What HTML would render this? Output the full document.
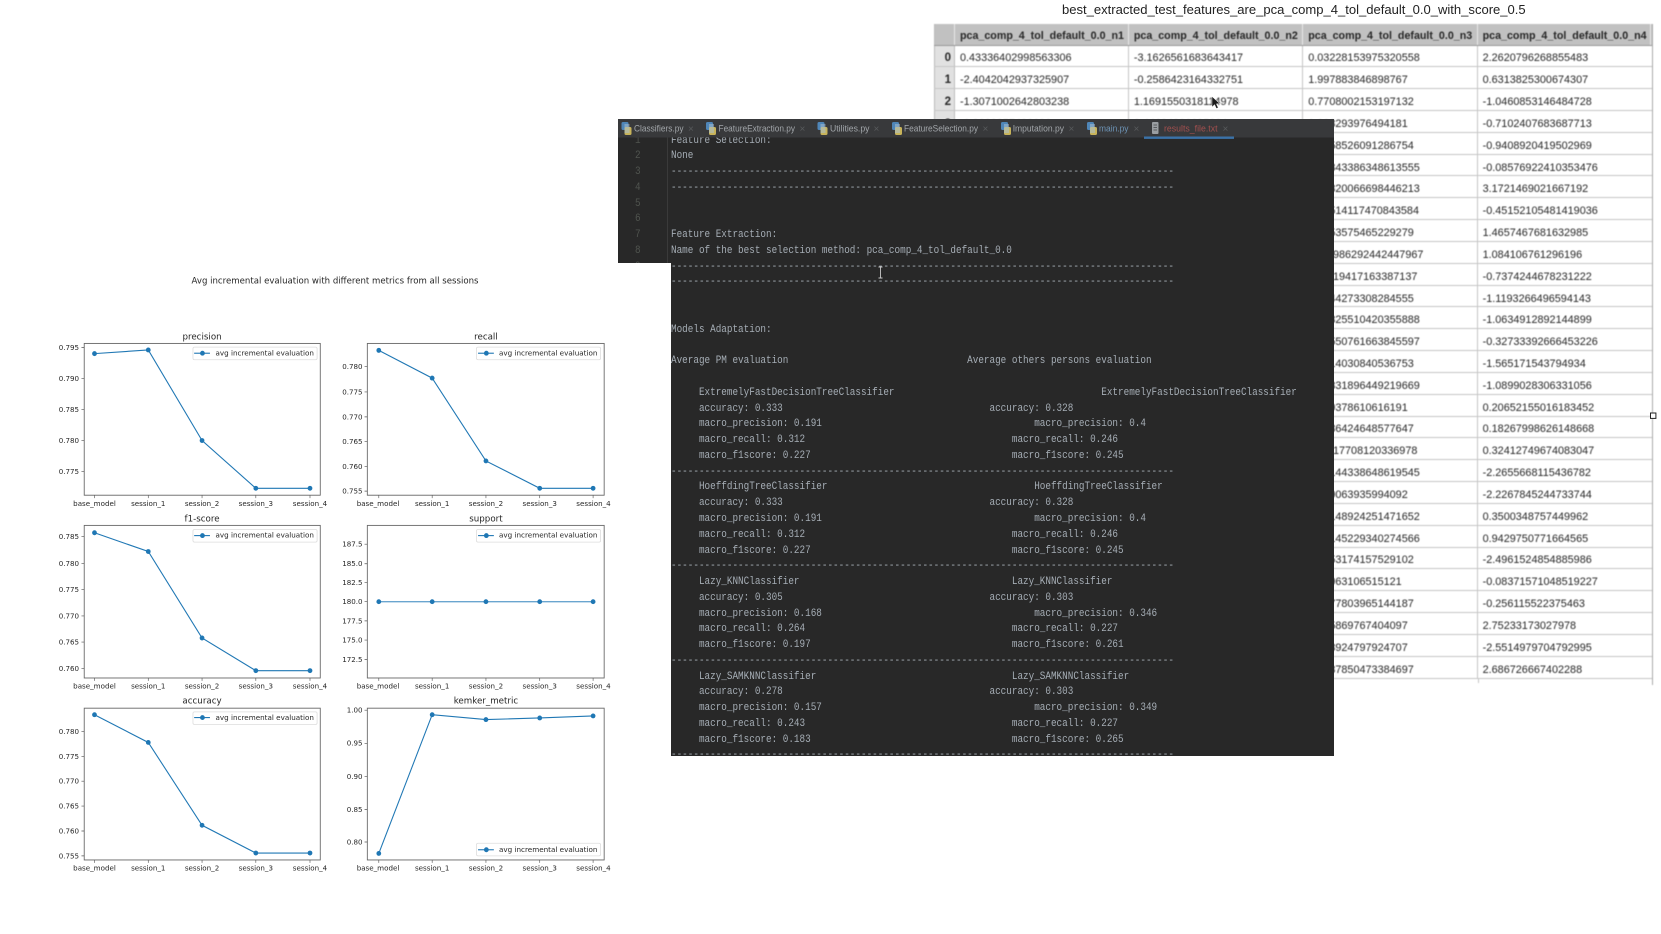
<!DOCTYPE html>
<html lang="en">
<head>
<meta charset="utf-8">
<title>Evaluation results</title>
<style>
html,body{margin:0;padding:0;background:#fff}
body{width:1661px;height:934px;overflow:hidden;position:relative}
#plots{position:absolute;left:0;top:0;filter:blur(.3px)}
#plots text{font-family:"DejaVu Sans","Liberation Sans",sans-serif;fill:#262626}
#plots .t{font-size:18px}
#plots .e{text-anchor:end}
#plots .m{text-anchor:middle}
#plots .h{font-size:22px;text-anchor:middle}
#plots .ax{fill:none;stroke:#666;stroke-width:2.2}
#plots .tk{fill:none;stroke:#555;stroke-width:1.6}
#plots .ln{fill:none;stroke:#1f77b4;stroke-width:2.7}
#plots .dt{fill:#1f77b4}
#plots .lg{fill:#fff;stroke:#ddd;stroke-width:2}
#title{position:absolute;left:1062px;top:2px;width:463px;text-align:center;font:13.04px/16px "Liberation Sans",sans-serif;color:#222;white-space:nowrap;filter:blur(.35px)}
#tbl{position:absolute;left:933.5px;top:23.5px;width:719px;height:661px;font:10.85px "Liberation Sans",sans-serif;color:#262626;filter:blur(.4px);border-right:1px solid #aaa;box-sizing:border-box}
#tbl .r{display:flex;height:21.83px;box-sizing:border-box;border-bottom:1.6px solid #c6c6c6;align-items:center}
#tbl .r.hd{height:22px;background:#c1c1c1;font-weight:bold;font-size:10.7px;border-bottom:1px solid #999}
#tbl .i{width:21.5px;height:100%;background:#e1e1e1;font-weight:bold;text-align:right;padding-right:3px;padding-top:5px;box-sizing:border-box;display:flex;align-items:center;justify-content:flex-end;font-size:11.5px;border-right:1.4px solid #bcbcbc;border-left:1px solid #bbb}
#tbl .hd .i{background:#c1c1c1;border-right:1.4px solid #e8e8e8;padding-top:3px}
#tbl .c{height:100%;box-sizing:border-box;padding-left:5px;padding-top:5px;display:flex;align-items:center;white-space:nowrap;border-right:1.4px solid #c6c6c6;overflow:hidden}
#tbl .hd .c{border-right:1.4px solid #e8e8e8;padding-top:3px}
#tbl .a{width:174px}
#tbl .b{width:174.5px}
#tbl .d{width:174.5px}
#tbl .f{width:174px;border-right:0}
#tbl .tail{height:4px;position:relative}
#tbl .tail i{position:absolute;top:0;bottom:0;width:1.4px;background:#c6c6c6;display:block}
#ed{position:absolute;left:618px;top:119px;width:716px;height:637px;background:#282828;clip-path:polygon(0 0,100% 0,100% 100%,53px 100%,53px 144px,0 144px);overflow:hidden}
#gut{position:absolute;left:49px;top:18px;width:1px;height:126px;background:#3a3a3a}
#code,#nums{position:absolute;margin:0;font:11px/15.77px "Liberation Mono",monospace;transform-origin:0 0;transform:scaleX(.8465);white-space:pre;filter:blur(.35px)}
#code{left:52.5px;top:14.6px;color:#a6aeb6}
#nums{left:17px;top:14.6px;color:#50544f}
#tabs{position:absolute;left:0;top:0;filter:blur(.35px)}
#tabs text{font-family:"Liberation Sans",sans-serif;font-size:9.5px;fill:#a2a6aa}
#tabs .x{fill:#585a5c;font-size:10px}
#top{position:absolute;left:0;top:0;pointer-events:none}
</style>
</head>
<body>

<svg id="plots" width="1661" height="934" viewBox="0 0 1661 934" xmlns="http://www.w3.org/2000/svg">
<text x="335" y="283.5" font-size="9" text-anchor="middle" textLength="287" lengthAdjust="spacingAndGlyphs">Avg incremental evaluation with different metrics from all sessions</text>
<g transform="translate(0,250) scale(.3954,.408)">

<!-- precision -->
<text class="h" x="511" y="219">precision</text>
<rect class="ax" x="213" y="229" width="597" height="372"/>
<path class="tk" d="M239 601v7M375 601v7M511 601v7M647 601v7M784 601v7M213 239h-7M213 315h-7M213 391h-7M213 467h-7M213 543h-7"/>
<text class="t e" x="200" y="245">0.795</text><text class="t e" x="200" y="321">0.790</text><text class="t e" x="200" y="397">0.785</text><text class="t e" x="200" y="473">0.780</text><text class="t e" x="200" y="549">0.775</text>
<text class="t m" x="239" y="627">base_model</text><text class="t m" x="375" y="627">session_1</text><text class="t m" x="511" y="627">session_2</text><text class="t m" x="647" y="627">session_3</text><text class="t m" x="784" y="627">session_4</text>
<polyline class="ln" points="239,254 375,245 511,467 647,584 784,584"/>
<circle class="dt" cx="239" cy="254" r="6"/><circle class="dt" cx="375" cy="245" r="6"/><circle class="dt" cx="511" cy="467" r="6"/><circle class="dt" cx="647" cy="584" r="6"/><circle class="dt" cx="784" cy="584" r="6"/>
<rect class="lg" x="488" y="238" width="314" height="31" rx="4"/>
<path class="ln" d="M491 253h40"/><circle class="dt" cx="512" cy="253" r="6"/>
<text class="t" x="545" y="258" textLength="249" lengthAdjust="spacingAndGlyphs">avg incremental evaluation</text>

<!-- recall -->
<text class="h" x="1229" y="219">recall</text>
<rect class="ax" x="929" y="229" width="599" height="372"/>
<path class="tk" d="M958 601v7M1093 601v7M1229 601v7M1365 601v7M1500 601v7M929 286h-7M929 348h-7M929 409h-7M929 469h-7M929 531h-7M929 591h-7"/>
<text class="t e" x="917" y="292">0.780</text><text class="t e" x="917" y="354">0.775</text><text class="t e" x="917" y="415">0.770</text><text class="t e" x="917" y="475">0.765</text><text class="t e" x="917" y="537">0.760</text><text class="t e" x="917" y="597">0.755</text>
<text class="t m" x="956" y="627">base_model</text><text class="t m" x="1093" y="627">session_1</text><text class="t m" x="1229" y="627">session_2</text><text class="t m" x="1365" y="627">session_3</text><text class="t m" x="1501" y="627">session_4</text>
<polyline class="ln" points="958,246 1093,314 1229,517 1365,584 1500,584"/>
<circle class="dt" cx="958" cy="246" r="6"/><circle class="dt" cx="1093" cy="314" r="6"/><circle class="dt" cx="1229" cy="517" r="6"/><circle class="dt" cx="1365" cy="584" r="6"/><circle class="dt" cx="1500" cy="584" r="6"/>
<rect class="lg" x="1205" y="238" width="314" height="31" rx="4"/>
<path class="ln" d="M1209 253h40"/><circle class="dt" cx="1230" cy="253" r="6"/>
<text class="t" x="1262" y="258" textLength="249" lengthAdjust="spacingAndGlyphs">avg incremental evaluation</text>

<!-- f1-score -->
<text class="h" x="511" y="665">f1-score</text>
<rect class="ax" x="213" y="675" width="597" height="374"/>
<path class="tk" d="M239 1049v7M375 1049v7M511 1049v7M647 1049v7M784 1049v7M213 702h-7M213 768h-7M213 832h-7M213 897h-7M213 961h-7M213 1026h-7"/>
<text class="t e" x="200" y="708">0.785</text><text class="t e" x="200" y="774">0.780</text><text class="t e" x="200" y="838">0.775</text><text class="t e" x="200" y="903">0.770</text><text class="t e" x="200" y="967">0.765</text><text class="t e" x="200" y="1032">0.760</text>
<text class="t m" x="239" y="1075">base_model</text><text class="t m" x="375" y="1075">session_1</text><text class="t m" x="511" y="1075">session_2</text><text class="t m" x="647" y="1075">session_3</text><text class="t m" x="784" y="1075">session_4</text>
<polyline class="ln" points="239,693 375,739 511,951 647,1031 784,1031"/>
<circle class="dt" cx="239" cy="693" r="6"/><circle class="dt" cx="375" cy="739" r="6"/><circle class="dt" cx="511" cy="951" r="6"/><circle class="dt" cx="647" cy="1031" r="6"/><circle class="dt" cx="784" cy="1031" r="6"/>
<rect class="lg" x="488" y="685" width="314" height="31" rx="4"/>
<path class="ln" d="M491 700h40"/><circle class="dt" cx="512" cy="700" r="6"/>
<text class="t" x="545" y="705" textLength="249" lengthAdjust="spacingAndGlyphs">avg incremental evaluation</text>

<!-- support -->
<text class="h" x="1229" y="665">support</text>
<rect class="ax" x="929" y="675" width="599" height="374"/>
<path class="tk" d="M958 1049v7M1093 1049v7M1229 1049v7M1365 1049v7M1500 1049v7M929 721h-7M929 769h-7M929 815h-7M929 862h-7M929 909h-7M929 956h-7M929 1004h-7"/>
<text class="t e" x="917" y="727">187.5</text><text class="t e" x="917" y="775">185.0</text><text class="t e" x="917" y="821">182.5</text><text class="t e" x="917" y="868">180.0</text><text class="t e" x="917" y="915">177.5</text><text class="t e" x="917" y="962">175.0</text><text class="t e" x="917" y="1010">172.5</text>
<text class="t m" x="956" y="1075">base_model</text><text class="t m" x="1093" y="1075">session_1</text><text class="t m" x="1229" y="1075">session_2</text><text class="t m" x="1365" y="1075">session_3</text><text class="t m" x="1501" y="1075">session_4</text>
<polyline class="ln" style="stroke:#6aa5cf;stroke-width:3.4" points="958,862 1093,862 1229,862 1365,862 1500,862"/>
<circle class="dt" cx="958" cy="862" r="6"/><circle class="dt" cx="1093" cy="862" r="6"/><circle class="dt" cx="1229" cy="862" r="6"/><circle class="dt" cx="1365" cy="862" r="6"/><circle class="dt" cx="1500" cy="862" r="6"/>
<rect class="lg" x="1205" y="685" width="314" height="31" rx="4"/>
<path class="ln" d="M1209 700h40"/><circle class="dt" cx="1230" cy="700" r="6"/>
<text class="t" x="1262" y="705" textLength="249" lengthAdjust="spacingAndGlyphs">avg incremental evaluation</text>

<!-- accuracy -->
<text class="h" x="511" y="1112">accuracy</text>
<rect class="ax" x="213" y="1123" width="597" height="372"/>
<path class="tk" d="M239 1495v7M375 1495v7M511 1495v7M647 1495v7M784 1495v7M213 1180h-7M213 1241h-7M213 1302h-7M213 1363h-7M213 1424h-7M213 1485h-7"/>
<text class="t e" x="200" y="1186">0.780</text><text class="t e" x="200" y="1247">0.775</text><text class="t e" x="200" y="1308">0.770</text><text class="t e" x="200" y="1369">0.765</text><text class="t e" x="200" y="1430">0.760</text><text class="t e" x="200" y="1491">0.755</text>
<text class="t m" x="239" y="1521">base_model</text><text class="t m" x="375" y="1521">session_1</text><text class="t m" x="511" y="1521">session_2</text><text class="t m" x="647" y="1521">session_3</text><text class="t m" x="784" y="1521">session_4</text>
<polyline class="ln" points="239,1139 375,1207 511,1410 647,1478 784,1478"/>
<circle class="dt" cx="239" cy="1139" r="6"/><circle class="dt" cx="375" cy="1207" r="6"/><circle class="dt" cx="511" cy="1410" r="6"/><circle class="dt" cx="647" cy="1478" r="6"/><circle class="dt" cx="784" cy="1478" r="6"/>
<rect class="lg" x="488" y="1132" width="314" height="31" rx="4"/>
<path class="ln" d="M491 1146h40"/><circle class="dt" cx="512" cy="1146" r="6"/>
<text class="t" x="545" y="1152" textLength="249" lengthAdjust="spacingAndGlyphs">avg incremental evaluation</text>

<!-- kemker_metric -->
<text class="h" x="1229" y="1112">kemker_metric</text>
<rect class="ax" x="929" y="1123" width="599" height="372"/>
<path class="tk" d="M958 1495v7M1093 1495v7M1229 1495v7M1365 1495v7M1500 1495v7M929 1128h-7M929 1209h-7M929 1290h-7M929 1371h-7M929 1451h-7"/>
<text class="t e" x="917" y="1134">1.00</text><text class="t e" x="917" y="1215">0.95</text><text class="t e" x="917" y="1296">0.90</text><text class="t e" x="917" y="1377">0.85</text><text class="t e" x="917" y="1457">0.80</text>
<text class="t m" x="956" y="1521">base_model</text><text class="t m" x="1093" y="1521">session_1</text><text class="t m" x="1229" y="1521">session_2</text><text class="t m" x="1365" y="1521">session_3</text><text class="t m" x="1501" y="1521">session_4</text>
<polyline class="ln" points="958,1479 1093,1139 1229,1151 1365,1147 1500,1142"/>
<circle class="dt" cx="958" cy="1479" r="6"/><circle class="dt" cx="1093" cy="1139" r="6"/><circle class="dt" cx="1229" cy="1151" r="6"/><circle class="dt" cx="1365" cy="1147" r="6"/><circle class="dt" cx="1500" cy="1142" r="6"/>
<rect class="lg" x="1205" y="1454" width="314" height="31" rx="4"/>
<path class="ln" d="M1209 1470h40"/><circle class="dt" cx="1230" cy="1470" r="6"/>
<text class="t" x="1262" y="1475" textLength="249" lengthAdjust="spacingAndGlyphs">avg incremental evaluation</text>
</g>
</svg>

<div id="title">best_extracted_test_features_are_pca_comp_4_tol_default_0.0_with_score_0.5</div>

<div id="tbl">
<div class="r hd"><div class="i"></div><div class="c a">pca_comp_4_tol_default_0.0_n1</div><div class="c b">pca_comp_4_tol_default_0.0_n2</div><div class="c d">pca_comp_4_tol_default_0.0_n3</div><div class="c f">pca_comp_4_tol_default_0.0_n4</div></div>
<div class="r"><div class="i">0</div><div class="c a">0.43336402998563306</div><div class="c b">-3.1626561683643417</div><div class="c d">0.03228153975320558</div><div class="c f">2.2620796268855483</div></div>
<div class="r"><div class="i">1</div><div class="c a">-2.4042042937325907</div><div class="c b">-0.2586423164332751</div><div class="c d">1.997883846898767</div><div class="c f">0.6313825300674307</div></div>
<div class="r"><div class="i">2</div><div class="c a">-1.3071002642803238</div><div class="c b">1.1691550318114978</div><div class="c d">0.7708002153197132</div><div class="c f">-1.0460853146484728</div></div>
<div class="r"><div class="i">3</div><div class="c a">-0.3633357436626</div><div class="c b">0.44634326635334</div><div class="c d">0.328293976494181</div><div class="c f">-0.7102407683687713</div></div>
<div class="r"><div class="i">4</div><div class="c a"></div><div class="c b"></div><div class="c d">0.1458526091286754</div><div class="c f">-0.9408920419502969</div></div>
<div class="r"><div class="i">5</div><div class="c a"></div><div class="c b"></div><div class="c d">0.14843386348613555</div><div class="c f">-0.08576922410353476</div></div>
<div class="r"><div class="i">6</div><div class="c a"></div><div class="c b"></div><div class="c d">0.14820066698446213</div><div class="c f">3.1721469021667192</div></div>
<div class="r"><div class="i">7</div><div class="c a"></div><div class="c b"></div><div class="c d">0.14514117470843584</div><div class="c f">-0.45152105481419036</div></div>
<div class="r"><div class="i">8</div><div class="c a"></div><div class="c b"></div><div class="c d">0.1453575465229279</div><div class="c f">1.4657467681632985</div></div>
<div class="r"><div class="i">9</div><div class="c a"></div><div class="c b"></div><div class="c d">-0.14986292442447967</div><div class="c f">1.084106761296196</div></div>
<div class="r"><div class="i">10</div><div class="c a"></div><div class="c b"></div><div class="c d">0.11119417163387137</div><div class="c f">-0.7374244678231222</div></div>
<div class="r"><div class="i">11</div><div class="c a"></div><div class="c b"></div><div class="c d">0.1444273308284555</div><div class="c f">-1.1193266496594143</div></div>
<div class="r"><div class="i">12</div><div class="c a"></div><div class="c b"></div><div class="c d">0.14325510420355888</div><div class="c f">-1.0634912892144899</div></div>
<div class="r"><div class="i">13</div><div class="c a"></div><div class="c b"></div><div class="c d">0.14550761663845597</div><div class="c f">-0.32733392666453226</div></div>
<div class="r"><div class="i">14</div><div class="c a"></div><div class="c b"></div><div class="c d">0.1414030840536753</div><div class="c f">-1.565171543794934</div></div>
<div class="r"><div class="i">15</div><div class="c a"></div><div class="c b"></div><div class="c d">0.14331896449219669</div><div class="c f">-1.0899028306331056</div></div>
<div class="r"><div class="i">16</div><div class="c a"></div><div class="c b"></div><div class="c d">0.149378610616191</div><div class="c f">0.20652155016183452</div></div>
<div class="r"><div class="i">17</div><div class="c a"></div><div class="c b"></div><div class="c d">0.1386424648577647</div><div class="c f">0.18267998626148668</div></div>
<div class="r"><div class="i">18</div><div class="c a"></div><div class="c b"></div><div class="c d">0.11117708120336978</div><div class="c f">0.32412749674083047</div></div>
<div class="r"><div class="i">19</div><div class="c a"></div><div class="c b"></div><div class="c d">0.14144338648619545</div><div class="c f">-2.2655668115436782</div></div>
<div class="r"><div class="i">20</div><div class="c a"></div><div class="c b"></div><div class="c d">0.149063935994092</div><div class="c f">-2.2267845244733744</div></div>
<div class="r"><div class="i">21</div><div class="c a"></div><div class="c b"></div><div class="c d">0.14148924251471652</div><div class="c f">0.3500348757449962</div></div>
<div class="r"><div class="i">22</div><div class="c a"></div><div class="c b"></div><div class="c d">0.14145229340274566</div><div class="c f">0.9429750771664565</div></div>
<div class="r"><div class="i">23</div><div class="c a"></div><div class="c b"></div><div class="c d">0.1453174157529102</div><div class="c f">-2.4961524854885986</div></div>
<div class="r"><div class="i">24</div><div class="c a"></div><div class="c b"></div><div class="c d">0.14963106515121</div><div class="c f">-0.08371571048519227</div></div>
<div class="r"><div class="i">25</div><div class="c a"></div><div class="c b"></div><div class="c d">0.1477803965144187</div><div class="c f">-0.256115522375463</div></div>
<div class="r"><div class="i">26</div><div class="c a"></div><div class="c b"></div><div class="c d">0.145869767404097</div><div class="c f">2.75233173027978</div></div>
<div class="r"><div class="i">27</div><div class="c a"></div><div class="c b"></div><div class="c d">0.148924797924707</div><div class="c f">-2.5514979704792995</div></div>
<div class="r"><div class="i">28</div><div class="c a"></div><div class="c b"></div><div class="c d">0.1437850473384697</div><div class="c f">2.686726667402288</div></div>
<div class="tail"><i style="left:544.5px"></i></div>
</div>

<div id="ed">
<pre id="nums">1
2
3
4
5
6
7
8
9</pre>
<div id="gut"></div>
<pre id="code">Feature Selection:
None
------------------------------------------------------------------------------------------
------------------------------------------------------------------------------------------


Feature Extraction:
Name of the best selection method: pca_comp_4_tol_default_0.0
------------------------------------------------------------------------------------------
------------------------------------------------------------------------------------------


Models Adaptation:

Average PM evaluation                                Average others persons evaluation

     ExtremelyFastDecisionTreeClassifier                                     ExtremelyFastDecisionTreeClassifier
     accuracy: 0.333                                     accuracy: 0.328
     macro_precision: 0.191                                      macro_precision: 0.4
     macro_recall: 0.312                                     macro_recall: 0.246
     macro_f1score: 0.227                                    macro_f1score: 0.245
------------------------------------------------------------------------------------------
     HoeffdingTreeClassifier                                     HoeffdingTreeClassifier
     accuracy: 0.333                                     accuracy: 0.328
     macro_precision: 0.191                                      macro_precision: 0.4
     macro_recall: 0.312                                     macro_recall: 0.246
     macro_f1score: 0.227                                    macro_f1score: 0.245
------------------------------------------------------------------------------------------
     Lazy_KNNClassifier                                      Lazy_KNNClassifier
     accuracy: 0.305                                     accuracy: 0.303
     macro_precision: 0.168                                      macro_precision: 0.346
     macro_recall: 0.264                                     macro_recall: 0.227
     macro_f1score: 0.197                                    macro_f1score: 0.261
------------------------------------------------------------------------------------------
     Lazy_SAMKNNClassifier                                   Lazy_SAMKNNClassifier
     accuracy: 0.278                                     accuracy: 0.303
     macro_precision: 0.157                                      macro_precision: 0.349
     macro_recall: 0.243                                     macro_recall: 0.227
     macro_f1score: 0.183                                    macro_f1score: 0.265
------------------------------------------------------------------------------------------</pre>
<svg id="tabs" width="716" height="20" viewBox="618 119 716 20" xmlns="http://www.w3.org/2000/svg">
<defs>
<g id="py"><rect x="0" y="0" width="7" height="8" rx="1.5" fill="#4f86b8"/><rect x="3" y="5" width="7" height="8" rx="1.5" fill="#c8b45a"/><rect x="3" y="2" width="5" height="9" fill="#a9c0d0" opacity=".55"/></g>
</defs>
<rect x="618" y="119" width="716" height="18.5" fill="#38393b"/>
<use href="#py" x="621.5" y="122"/><text x="634" y="131.5" textLength="49.5" lengthAdjust="spacingAndGlyphs">Classifiers.py</text><text class="x" x="688" y="132">×</text>
<use href="#py" x="706" y="122"/><text x="718.5" y="131.5" textLength="76.5" lengthAdjust="spacingAndGlyphs">FeatureExtraction.py</text><text class="x" x="799.5" y="132">×</text>
<use href="#py" x="817.5" y="122"/><text x="830" y="131.5" textLength="39.5" lengthAdjust="spacingAndGlyphs">Utilities.py</text><text class="x" x="873.5" y="132">×</text>
<use href="#py" x="892" y="122"/><text x="904" y="131.5" textLength="74" lengthAdjust="spacingAndGlyphs">FeatureSelection.py</text><text class="x" x="982.5" y="132">×</text>
<use href="#py" x="1001" y="122"/><text x="1012.7" y="131.5" textLength="51.3" lengthAdjust="spacingAndGlyphs">Imputation.py</text><text class="x" x="1068.5" y="132">×</text>
<use href="#py" x="1087" y="122"/><text x="1099" y="131.5" textLength="29.5" lengthAdjust="spacingAndGlyphs" style="fill:#6d93b5">main.py</text><text class="x" x="1133.5" y="132">×</text>
<rect x="1152" y="122" width="6.5" height="12" rx="1" fill="#9a9ea2"/><path d="M1153.5 125h3.5M1153.5 127.5h3.5M1153.5 130h3.5" stroke="#44474a" stroke-width=".8"/>
<text x="1164" y="131.5" textLength="53.5" lengthAdjust="spacingAndGlyphs" style="fill:#a3504f">results_file.txt</text><text class="x" x="1222.5" y="132">×</text>
<rect x="1144" y="136.5" width="90" height="2.4" fill="#3b72a8"/>
</svg>
</div>

<svg id="top" width="1661" height="934" viewBox="0 0 1661 934" xmlns="http://www.w3.org/2000/svg">
<path d="M1212 96.5v10.5l2.6-2.4 1.8 3.9 1.8-.8-1.8-3.8 3.3-.3z" fill="#1a1a1a" stroke="#fff" stroke-width=".4"/>
<path d="M878.5 267h4M880.5 267v11M878.5 278h4" fill="none" stroke="#c8c8c8" stroke-width=".9"/>
<rect x="1650.5" y="413" width="5.4" height="5.4" fill="#fff" stroke="#222" stroke-width="1"/>
</svg>

</body>
</html>
